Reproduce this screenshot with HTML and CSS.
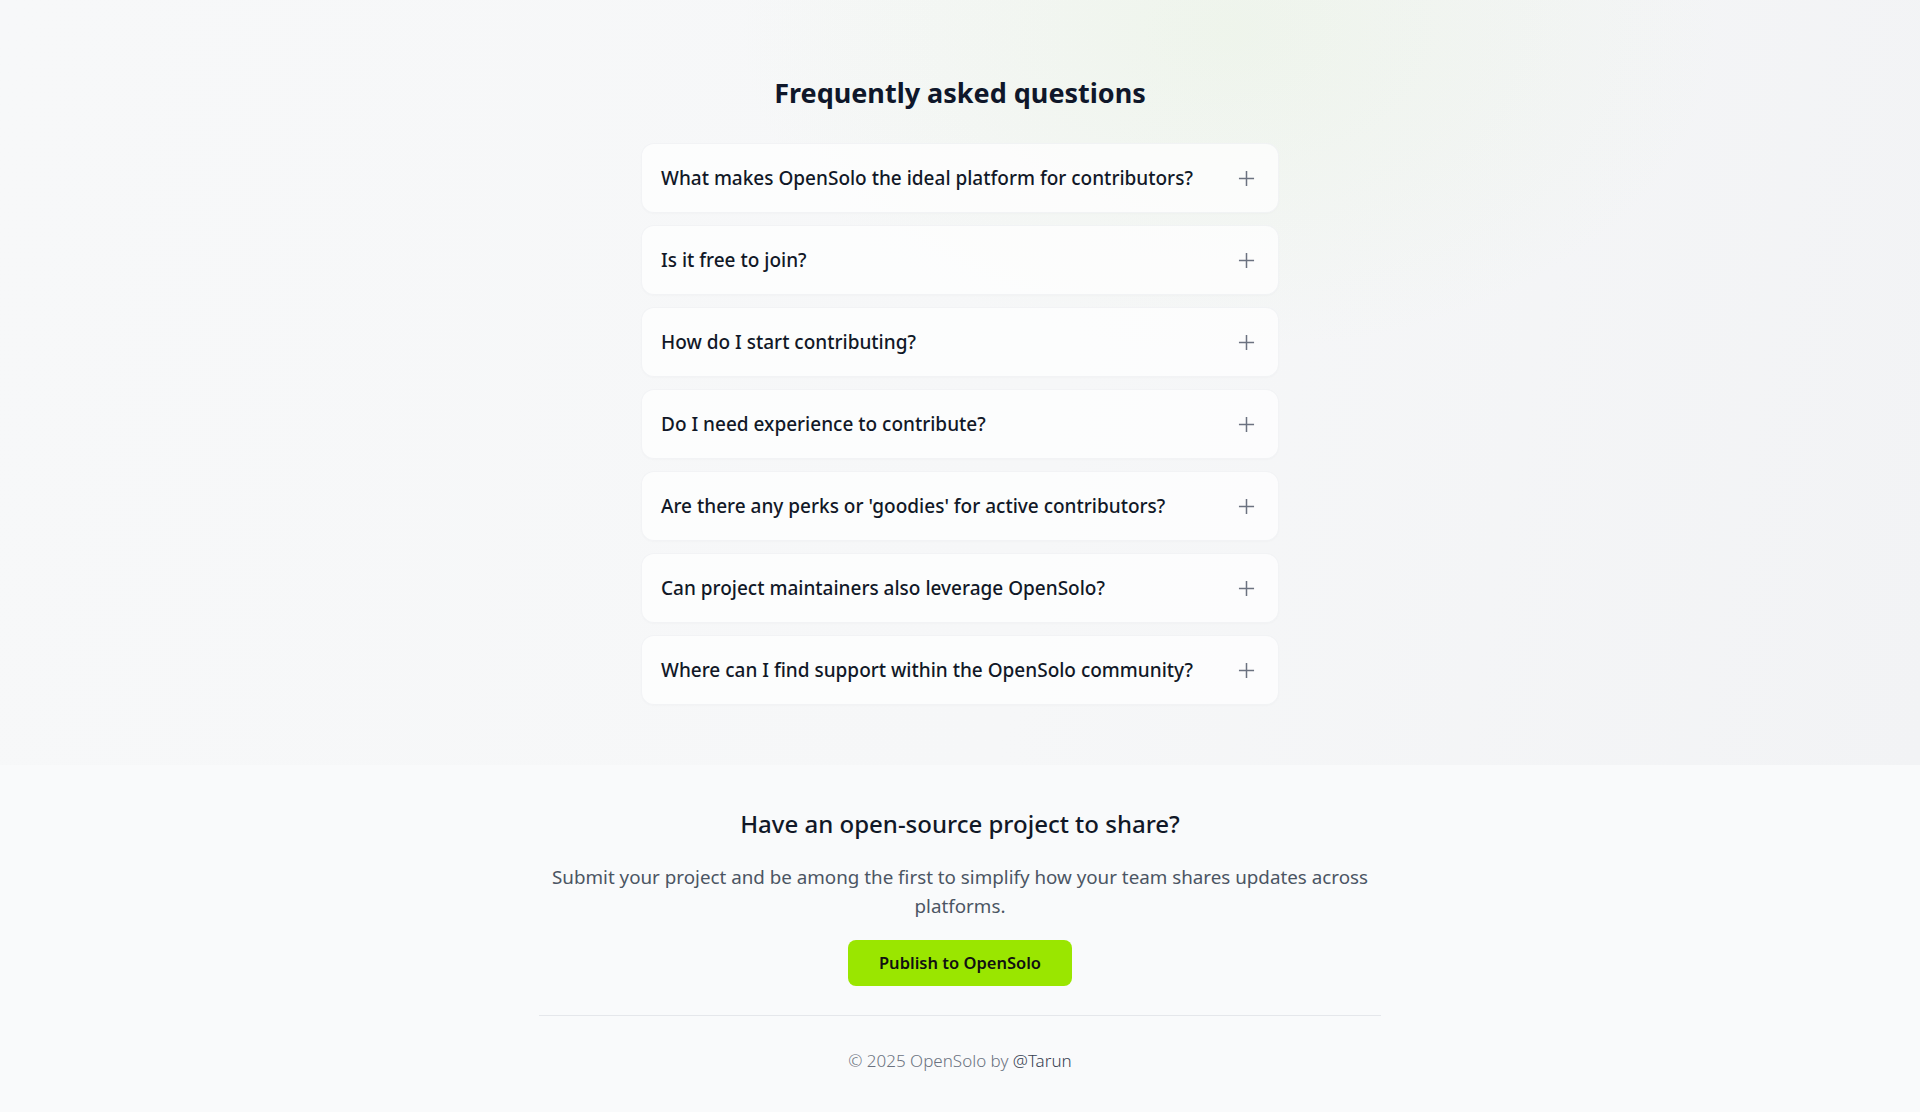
FILE: index.html
```html
<!doctype html>
<html>
  <head>
    <title>OpenSolo - FAQ</title>
    <link rel="stylesheet" href="styles.css">
  </head>
  <body>
    <section class="faq">
      <h2 class="faq-title">Frequently asked questions</h2>
      <div class="faq-list">
        <div class="faq-item">
          <span class="faq-question">What makes OpenSolo the ideal platform for contributors?</span>
          <svg class="plus" viewBox="0 0 18 18"><path d="M9 1v16M1 9h16" /></svg>
        </div>
        <div class="faq-item">
          <span class="faq-question">Is it free to join?</span>
          <svg class="plus" viewBox="0 0 18 18"><path d="M9 1v16M1 9h16" /></svg>
        </div>
        <div class="faq-item">
          <span class="faq-question">How do I start contributing?</span>
          <svg class="plus" viewBox="0 0 18 18"><path d="M9 1v16M1 9h16" /></svg>
        </div>
        <div class="faq-item">
          <span class="faq-question">Do I need experience to contribute?</span>
          <svg class="plus" viewBox="0 0 18 18"><path d="M9 1v16M1 9h16" /></svg>
        </div>
        <div class="faq-item">
          <span class="faq-question">Are there any perks or 'goodies' for active contributors?</span>
          <svg class="plus" viewBox="0 0 18 18"><path d="M9 1v16M1 9h16" /></svg>
        </div>
        <div class="faq-item">
          <span class="faq-question">Can project maintainers also leverage OpenSolo?</span>
          <svg class="plus" viewBox="0 0 18 18"><path d="M9 1v16M1 9h16" /></svg>
        </div>
        <div class="faq-item">
          <span class="faq-question">Where can I find support within the OpenSolo community?</span>
          <svg class="plus" viewBox="0 0 18 18"><path d="M9 1v16M1 9h16" /></svg>
        </div>
      </div>
    </section>

    <section class="cta">
      <div class="cta-inner">
        <h3 class="cta-title">Have an open-source project to share?</h3>
        <p class="cta-text">Submit your project and be among the first to simplify how your team shares updates across platforms.</p>
        <a class="cta-button" href="#">Publish to OpenSolo</a>
      </div>
      <footer class="footer">
        &copy; 2025 OpenSolo by <a href="#" class="author">@Tarun</a>
      </footer>
    </section>
  </body>
</html>
```

FILE: styles.css
```css
body {
  margin: 0;
  font-family: "Noto Sans", "Open Sans", Arial, sans-serif;
  background: #f9fafb;
  color: #111827;
}

.faq {
  padding: 75px 16px 60px;
  background:
    radial-gradient(ellipse 700px 460px at 64% 4%, rgba(205, 235, 180, 0.18), rgba(205, 235, 180, 0) 70%),
    linear-gradient(100deg, #f7f8f9 0%, #f6f7f8 55%, #f2f3f5 100%);
}

.faq-title {
  margin: 0 0 32px;
  text-align: center;
  font-size: 27px;
  line-height: 36px;
  font-weight: 700;
  color: #0f172a;
}

.faq-list {
  max-width: 638px;
  margin: 0 auto;
  display: flex;
  flex-direction: column;
  gap: 12px;
}

.faq-item {
  display: flex;
  align-items: center;
  justify-content: space-between;
  height: 70px;
  padding: 0 23px 0 19px;
  box-sizing: border-box;
  background: rgba(255, 255, 255, 0.7);
  border: 1px solid rgba(229, 231, 235, 0.45);
  border-radius: 13px;
  box-shadow: 0 1px 2px rgba(15, 23, 42, 0.02);
}

.faq-question {
  font-size: 19px;
  font-weight: 500;
  color: #111827;
}

.plus {
  width: 17px;
  height: 17px;
  fill: none;
  stroke: #6b7280;
  stroke-width: 1.6;
}

.cta {
  background: #f9fafb;
  padding-top: 43px;
}

.cta-inner {
  max-width: 840px;
  margin: 0 auto;
  text-align: center;
}

.cta-title {
  margin: 0 0 23px;
  font-size: 24px;
  line-height: 32px;
  font-weight: 500;
  color: #111827;
}

.cta-text {
  margin: 0 0 19px;
  font-size: 18.8px;
  line-height: 29px;
  color: #4b5563;
}

.cta-button {
  display: inline-block;
  padding: 11px 31px;
  font-size: 16.5px;
  line-height: 24px;
  font-weight: 600;
  color: #111;
  text-decoration: none;
  background: #9ae600;
  border-radius: 8px;
}

.footer {
  max-width: 842px;
  margin: 29px auto 0;
  padding: 33px 0 40px;
  border-top: 1px solid #e5e7eb;
  text-align: center;
  font-size: 17px;
  line-height: 24px;
  font-weight: 300;
  color: #6b7280;
}

.author {
  color: #374151;
  text-decoration: none;
}
```
